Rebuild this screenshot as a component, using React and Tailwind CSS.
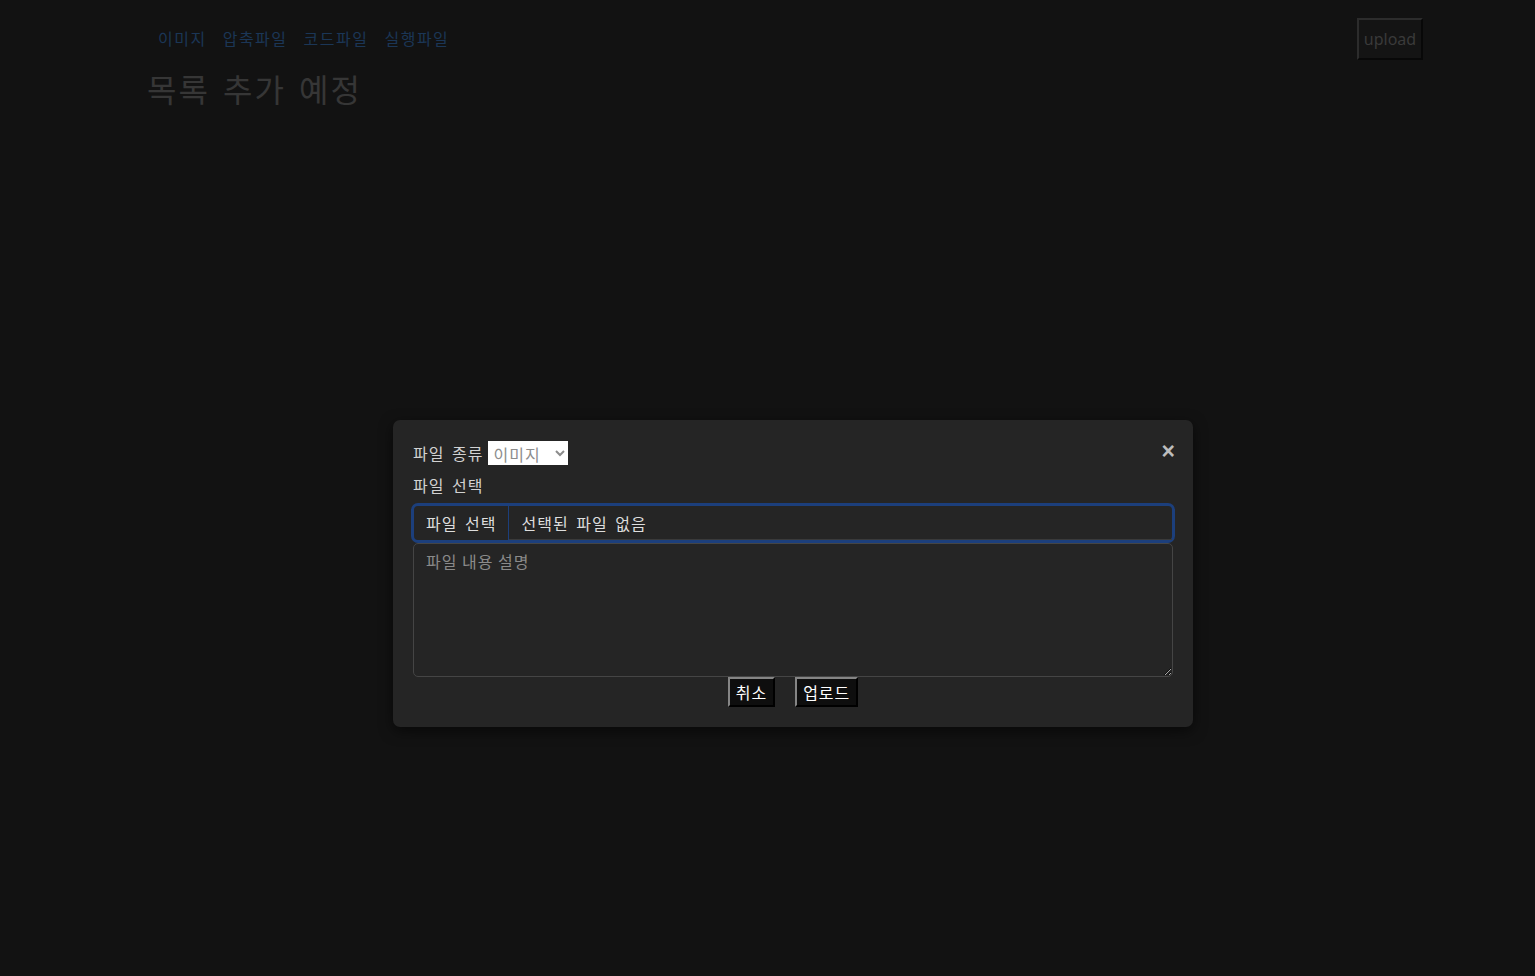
import React from 'react';

const navLinks = ['이미지', '압축파일', '코드파일', '실행파일'];

export default function App() {
  return (
    <div className="relative min-h-screen bg-[#121212] font-['Noto_Sans_CJK_KR','Noto_Sans',sans-serif] tracking-[1px] [word-spacing:3px]">
      {/* Page behind the dialog */}
      <div className="flex justify-between pl-[147px] pr-[112px] pt-[18px]">
        <div>
          <nav className="flex h-[40px] items-center gap-[16px] pl-[11px]">
            {navLinks.map((label) => (
              <a key={label} className="text-[16px] leading-[24px] tracking-[1.5px] text-[#1b3656] cursor-pointer">
                {label}
              </a>
            ))}
          </nav>
          <h1 className="mt-[10px] text-[32px] leading-[40px] text-[#363636] tracking-[2px] [word-spacing:4px]">목록 추가 예정</h1>
        </div>
        <button className="h-[42px] w-[66px] border-2 border-t-[#2c2c2c] border-l-[#2c2c2c] border-r-[#080808] border-b-[#080808] bg-[#141414] text-[16px] tracking-normal text-[#3a3a3a] font-['Noto_Sans',sans-serif]">
          upload
        </button>
      </div>

      {/* Upload dialog */}
      <div className="absolute left-[393px] top-[420px] w-[800px] rounded-[7px] bg-[#252525] p-[20px] pt-[21px] shadow-[0_4px_14px_rgba(0,0,0,0.55)]">
        <div className="flex h-[24px] items-center justify-between">
          <div className="flex items-center gap-[5px]">
            <label className="text-[16px] leading-[24px] text-[#d2d2d2]">파일 종류</label>
            <select className="h-[24px] w-[80px] bg-white pl-[1px] text-[16px] leading-[20px] text-[#8c8c8c]">
              <option>이미지</option>
              <option>압축파일</option>
              <option>코드파일</option>
              <option>실행파일</option>
            </select>
          </div>
          <span className="-mr-[2px] -mt-[4px] font-['Liberation_Sans',sans-serif] text-[23px] font-bold leading-[24px] tracking-normal text-[#bdbdbd] cursor-pointer">×</span>
        </div>

        <label className="mt-[8px] block h-[24px] text-[16px] leading-[24px] text-[#d2d2d2]">파일 선택</label>

        <div className="-mx-[2px] mt-[6px] flex h-[40px] items-stretch rounded-[7px] border-[3px] border-[#1c3f7c] text-[16px] text-[#dedede]">
          <div className="flex items-center border-r border-[#1c3f7c] px-[12px]">파일 선택</div>
          <div className="flex flex-1 items-center border-b border-[#3a3a3a] px-[12px]">선택된 파일 없음</div>
        </div>

        <textarea
          placeholder="파일 내용 설명"
          className="block h-[134px] w-full resize-y rounded-[5px] border border-[#454545] bg-[#252525] px-[12px] pt-[5px] text-[16px] leading-[24px] text-[#dedede] placeholder:text-[#8a8a8a] outline-none"
        />

        <div className="flex justify-center gap-[20px]">
          <button className="h-[30px] border-2 border-t-[#858585] border-l-[#858585] border-r-black border-b-black bg-[#0e0e0e] px-[6px] text-[16px] leading-[22px] text-white">
            취소
          </button>
          <button className="h-[30px] border-2 border-t-[#858585] border-l-[#858585] border-r-black border-b-black bg-[#0e0e0e] px-[6px] text-[16px] leading-[22px] text-white">
            업로드
          </button>
        </div>
      </div>
    </div>
  );
}
